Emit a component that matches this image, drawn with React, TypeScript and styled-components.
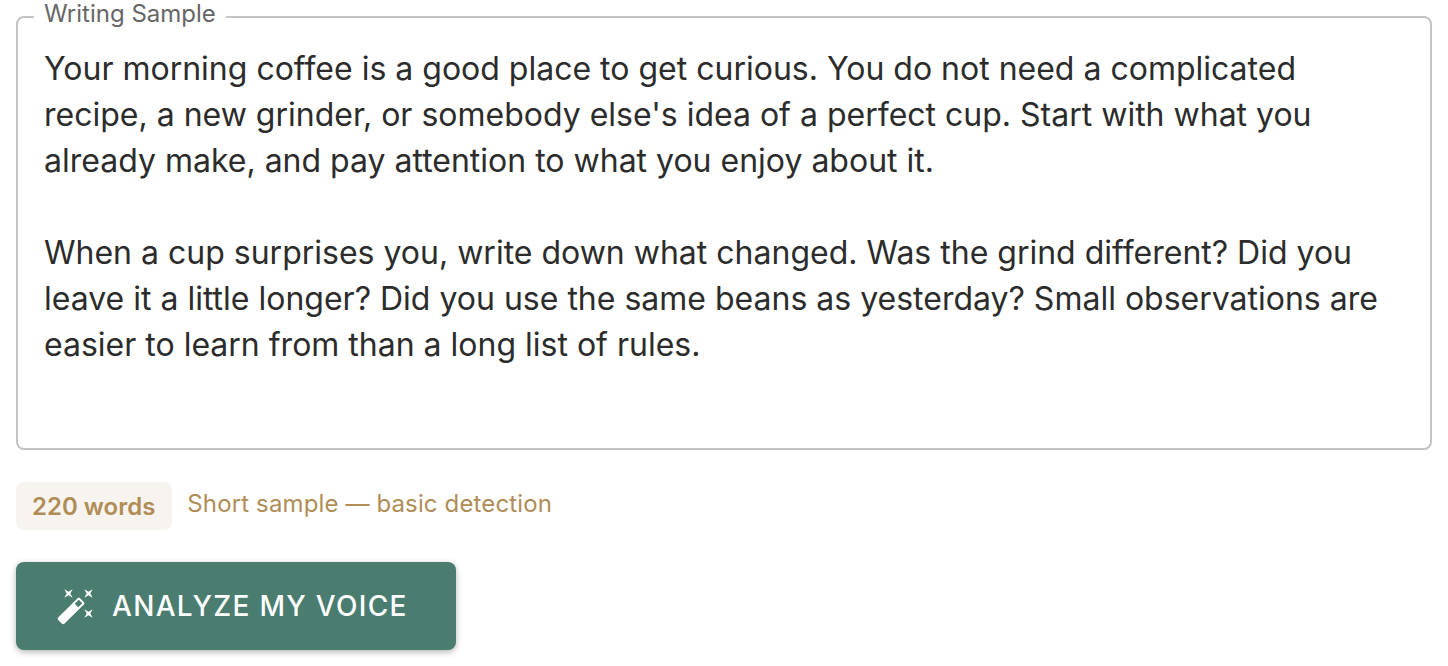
import React from 'react';
import styled, {createGlobalStyle} from 'styled-components';

const GlobalStyle = createGlobalStyle`
  html,
  body {
    margin: 0;
    background: #fff;
  }
  body {
    font-family: Inter, "Noto Sans", sans-serif;
  }
`;

const Page = styled.main`
  display: flex;
  flex-direction: column;
  align-items: flex-start;
  padding: 0 16px 16px;
`;

const SampleBox = styled.fieldset`
  box-sizing: border-box;
  width: 100%;
  height: 450px;
  margin: 0;
  padding: 0 26px;
  border: 2px solid #c4c4c4;
  border-radius: 8px;
`;

const SampleLabel = styled.legend`
  margin-left: -10px;
  padding: 0 10px 6px;
  color: #666;
  font-size: 24px;
  line-height: 28px;
`;

const SampleText = styled.div`
  margin-top: 12px;
  color: #2c2c2c;
  font-size: 32px;
  line-height: 46px;
  white-space: pre-wrap;
`;

const StatusRow = styled.div`
  display: flex;
  align-items: center;
  gap: 15px;
  margin-top: 32px;
`;

const WordCount = styled.span`
  display: flex;
  align-items: center;
  height: 48px;
  padding: 0 17px 0 16px;
  border-radius: 8px;
  background: #f7f4ef;
  color: #b08d57;
  font-size: 24px;
  font-weight: 600;
`;

const Hint = styled.span`
  margin-top: -6px;
  color: #b08d57;
  font-size: 24px;
  letter-spacing: 0.13px;
`;

const AnalyzeButton = styled.button`
  display: flex;
  align-items: center;
  gap: 16px;
  width: 440px;
  height: 88px;
  margin-top: 32px;
  padding: 0 0 0 40px;
  border: none;
  border-radius: 8px;
  background: #4a7c6f;
  box-shadow: 0 2px 6px rgba(0, 0, 0, 0.3);
  color: #fff;
  font-family: inherit;
  font-size: 28px;
  font-weight: 500;
  letter-spacing: 1.3px;
  text-transform: uppercase;
`;

const WandIcon = () => (
  <svg width="40" height="40" viewBox="0 0 24 24" fill="currentColor" aria-hidden="true">
    <path d="M7.5 5.6 10 7 8.6 4.5 10 2 7.5 3.4 5 2l1.4 2.5L5 7zm12 9.8L17 14l1.4 2.5L17 19l2.5-1.4L22 19l-1.4-2.5L22 14zM22 2l-2.5 1.4L17 2l1.4 2.5L17 7l2.5-1.4L22 7l-1.4-2.5zm-7.63 5.29a.9959.9959 0 0 0-1.41 0L1.29 18.96c-.39.39-.39 1.02 0 1.41l2.34 2.34c.39.39 1.02.39 1.41 0L16.7 11.05c.39-.39.39-1.02 0-1.41l-2.33-2.35zm-1.03 5.49-2.12-2.12 2.44-2.44 2.12 2.12-2.44 2.44z" />
  </svg>
);

const sample = `Your morning coffee is a good place to get curious. You do not need a complicated
recipe, a new grinder, or somebody else's idea of a perfect cup. Start with what you
already make, and pay attention to what you enjoy about it.

When a cup surprises you, write down what changed. Was the grind different? Did you
leave it a little longer? Did you use the same beans as yesterday? Small observations are
easier to learn from than a long list of rules.`;

export default function App() {
  return (
    <Page>
      <GlobalStyle />
      <SampleBox>
        <SampleLabel>Writing Sample</SampleLabel>
        <SampleText>{sample}</SampleText>
      </SampleBox>
      <StatusRow>
        <WordCount>220 words</WordCount>
        <Hint>Short sample — basic detection</Hint>
      </StatusRow>
      <AnalyzeButton>
        <WandIcon />
        Analyze my voice
      </AnalyzeButton>
    </Page>
  );
}
